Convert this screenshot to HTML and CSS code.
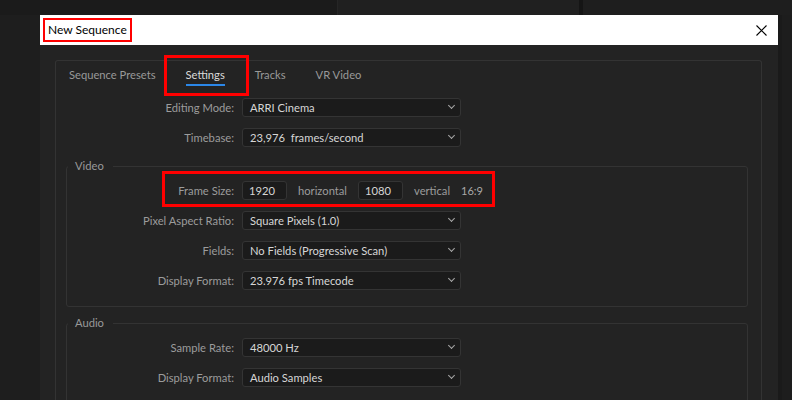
FILE: index.html
```html
<!DOCTYPE html>
<html lang="en">
<head>
    <meta charset="UTF-8">
    <title>New Sequence</title>
    <link rel="stylesheet" href="styles.css">
</head>
<body>
    <div class="desk-top">
        <span class="seg seg-a"></span>
        <span class="seg seg-b"></span>
        <span class="seg seg-c"></span>
        <span class="seg seg-d"></span>
    </div>
    <div class="desk-row">
        <div class="gutter"></div>
        <div class="dialog">
            <div class="titlebar">
                <span class="title">New Sequence</span>
                <svg class="close" width="11" height="11" viewBox="0 0 11 11">
                    <path d="M0.5 0.5 L10.5 10.5 M10.5 0.5 L0.5 10.5" stroke="#000" stroke-width="1.1" fill="none"/>
                </svg>
            </div>
            <div class="dialog-body">
                <div class="panel">
                    <nav class="tabs">
                        <span class="tab">Sequence Presets</span>
                        <span class="tab active">Settings</span>
                        <span class="tab">Tracks</span>
                        <span class="tab">VR Video</span>
                    </nav>

                    <div class="form">
                        <div class="row">
                            <label>Editing Mode:</label>
                            <div class="select">ARRI Cinema<span class="chev"></span></div>
                        </div>
                        <div class="row">
                            <label>Timebase:</label>
                            <div class="select">23,976&nbsp; frames/second<span class="chev"></span></div>
                        </div>

                        <fieldset class="group">
                            <legend>Video</legend>
                            <div class="row frame-row">
                                <label>Frame Size:</label>
                                <div class="num">1920</div>
                                <span class="unit">horizontal</span>
                                <div class="num">1080</div>
                                <span class="unit">vertical</span>
                                <span class="ratio">16:9</span>
                            </div>
                            <div class="row">
                                <label>Pixel Aspect Ratio:</label>
                                <div class="select">Square Pixels (1.0)<span class="chev"></span></div>
                            </div>
                            <div class="row">
                                <label>Fields:</label>
                                <div class="select">No Fields (Progressive Scan)<span class="chev"></span></div>
                            </div>
                            <div class="row">
                                <label>Display Format:</label>
                                <div class="select">23.976 fps Timecode<span class="chev"></span></div>
                            </div>
                        </fieldset>

                        <fieldset class="group">
                            <legend>Audio</legend>
                            <div class="row">
                                <label>Sample Rate:</label>
                                <div class="select">48000 Hz<span class="chev"></span></div>
                            </div>
                            <div class="row">
                                <label>Display Format:</label>
                                <div class="select">Audio Samples<span class="chev"></span></div>
                            </div>
                        </fieldset>
                    </div>
                </div>
            </div>
        </div>
        <div class="gutter-right"></div>
    </div>
</body>
</html>
```

FILE: styles.css
```css
html, body {
    margin: 0;
    padding: 0;
}
body {
    width: 792px;
    height: 400px;
    overflow: hidden;
    background-color: #1e1e1e;
    font-family: Lato, 'Liberation Sans', sans-serif;
    font-size: 11.2px;
    color: #9c9c9c;
}

/* background app behind the dialog */
.desk-top {
    display: flex;
    height: 15px;
}
.seg {
    display: block;
    height: 100%;
}
.seg-a { width: 337px; background-color: #1b1b1b; }
.seg-b { width: 242px; background-color: #202020; border-left: 1px solid #262626; box-sizing: border-box; }
.seg-c { width: 4px; background-color: #151515; }
.seg-d { flex: 1; background-color: #1e1e1e; }

.desk-row {
    display: flex;
    height: 385px;
}
.gutter {
    width: 40px;
    background-color: #1e1e1e;
}
.gutter-right {
    flex: 1;
    background-color: #1d1d1d;
    border-left: 4px solid #1a1a1a;
}

/* dialog */
.dialog {
    width: 738px;
    background-color: #232323;
    display: flex;
    flex-direction: column;
    overflow: hidden;
}
.titlebar {
    flex-shrink: 0;
    height: 30px;
    background-color: #fff;
    display: flex;
    align-items: center;
    justify-content: space-between;
    padding: 0 11px 0 3px;
}
.title {
    color: #000;
    font-size: 12px;
    line-height: 16px;
    padding: 2px 3px;
    border: 2px solid #f00;
}
.close {
    display: block;
}
.dialog-body {
    flex: 1;
    min-height: 0;
    padding: 15px 16px 0 15px;
}
.panel {
    border: 1px solid #333;
    border-bottom: none;
    border-radius: 3px 3px 0 0;
    height: 100%;
    box-sizing: border-box;
}

/* tabs */
.tabs {
    display: flex;
    gap: 30px;
    padding-left: 13px;
}
.tab {
    position: relative;
    padding: 6px 0 1px;
    line-height: 16px;
    border-bottom: 2px solid transparent;
    color: #999;
}
.tab.active {
    color: #dadada;
    border-bottom-color: #2b87e8;
}
.tab.active::after {
    content: '';
    position: absolute;
    left: -22px;
    right: -24px;
    top: -6px;
    bottom: -12px;
    border: 3px solid #f00;
}

/* form rows */
.form {
    margin-top: 12px;
}
.row {
    display: flex;
    align-items: center;
    height: 19px;
    margin-bottom: 11px;
}
.row label {
    width: 178px;
    text-align: right;
    margin-right: 8px;
    flex-shrink: 0;
}
.select {
    position: relative;
    width: 219px;
    height: 19px;
    box-sizing: border-box;
    background-color: #1b1b1b;
    border: 1px solid #343434;
    border-radius: 3px;
    color: #d6d6d6;
    padding-left: 7px;
    line-height: 17px;
}
.chev {
    position: absolute;
    right: 6px;
    top: 4px;
    width: 4px;
    height: 4px;
    border-right: 1px solid #a8a8a8;
    border-bottom: 1px solid #a8a8a8;
    transform: rotate(45deg);
}

/* grouped sections */
.group {
    margin: 6px 13px 0 10px;
    padding: 0 0 16px;
    border: 1px solid #333;
    border-radius: 3px;
}
.group + .group {
    margin-top: 8px;
}
.group legend {
    margin-left: 1px;
    padding: 0 9px 0 7px;
    line-height: 16px;
    color: #999;
}
.group .row:first-of-type {
    margin-top: 7px;
}
.group .row:last-child {
    margin-bottom: 0;
}
.group .row label {
    width: 167px;
}

.frame-row {
    position: relative;
}
.frame-row::after {
    content: '';
    position: absolute;
    left: 95px;
    width: 333px;
    top: -10px;
    bottom: -7px;
    border: 3px solid #f00;
    box-sizing: border-box;
}
.num {
    width: 45px;
    height: 19px;
    box-sizing: border-box;
    background-color: #1b1b1b;
    border: 1px solid #343434;
    border-radius: 3px;
    color: #d6d6d6;
    padding-left: 6px;
    line-height: 17px;
}
.unit {
    margin: 0 11px;
}
.ratio {
    color: #a8a8a8;
    font-size: 11px;
}
```
